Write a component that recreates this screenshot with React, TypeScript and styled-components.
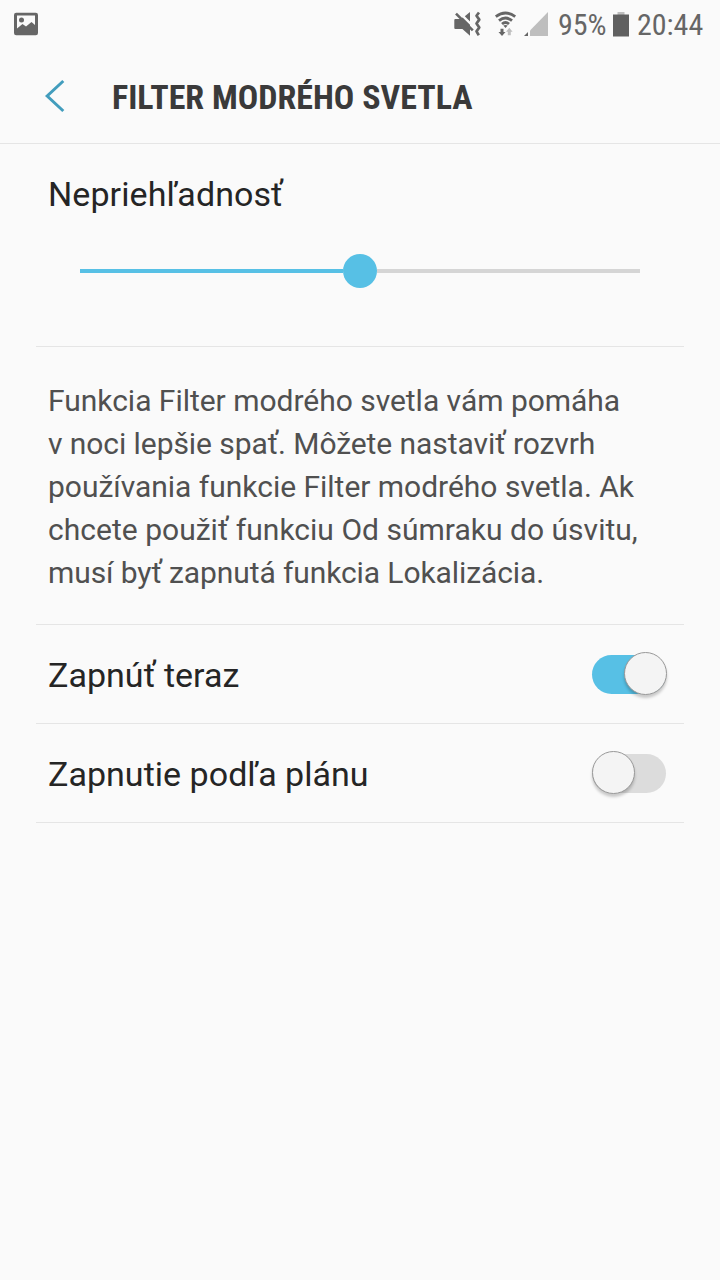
import React, { useState } from 'react';
import styled, { createGlobalStyle } from 'styled-components';

const GlobalStyle = createGlobalStyle`
  * { box-sizing: border-box; }
  body { margin: 0; background: #fafafa; }
`;

const Screen = styled.main`
  width: 720px;
  height: 1280px;
  background: #fafafa;
  color: #252525;
  font-family: Roboto, sans-serif;
  overflow: hidden;
`;

const StatusBar = styled.div`
  height: 48px;
  display: flex;
  align-items: center;
  justify-content: space-between;
  padding: 0 16px 0 14px;
`;

const StatusGroup = styled.div`
  display: flex;
  align-items: center;
`;

const Icon = styled.svg<{ $gap?: number }>`
  display: block;
  flex: none;
  margin-right: ${({ $gap = 0 }) => $gap}px;
`;

const StatusText = styled.span<{ $width: number }>`
  width: ${({ $width }) => $width}px;
  font: 400 30px/48px 'Roboto Condensed', Roboto, sans-serif;
  font-stretch: 75%;
  color: #666;
  white-space: nowrap;
  padding-top: 2px;
`;

const Header = styled.header`
  height: 96px;
  display: flex;
  align-items: center;
  padding-left: 44px;
  border-bottom: 1px solid #e5e5e5;
`;

const BackButton = styled.button`
  width: 68px;
  padding: 0;
  border: 0;
  background: none;
`;

const Title = styled.h1`
  margin: 0;
  font: 700 34px/40px 'Roboto Condensed', Roboto, sans-serif;
  font-stretch: 75%;
  color: #3a3a3a;
  white-space: nowrap;
  padding-top: 3px;
`;

const Section = styled.section<{ $height: number }>`
  height: ${({ $height }) => $height}px;
  margin: 0 36px;
  padding: 0 12px;
  border-bottom: 1px solid #e5e5e5;
`;

const Label = styled.div`
  font-size: 34px;
  line-height: 40px;
  letter-spacing: 0.03px;
  white-space: nowrap;
`;

const OpacityLabel = styled(Label)`
  padding-top: 30px;
  letter-spacing: 0.08px;
`;

const RowLabel = styled(Label)`
  padding-top: 2px;
`;

const Track = styled.div`
  display: flex;
  align-items: center;
  height: 34px;
  margin: 40px 32px 0;
`;

const Segment = styled.div<{ $filled?: boolean }>`
  flex: 1;
  height: 4px;
  background: ${({ $filled }) => ($filled ? '#57c0e5' : '#d5d5d5')};
`;

const Thumb = styled.div`
  width: 34px;
  height: 34px;
  border-radius: 50%;
  background: #57c0e5;
`;

const Description = styled.p`
  margin: 0;
  padding-top: 32px;
  font-size: 30px;
  line-height: 43px;
  color: #505050;
  white-space: nowrap;
`;

const Line = styled.span<{ $tracking: number }>`
  display: block;
  letter-spacing: ${({ $tracking }) => $tracking}px;
`;

const Row = styled(Section)`
  display: flex;
  align-items: center;
  justify-content: space-between;
  padding-right: 18px;
`;

const Switch = styled.button<{ $on: boolean }>`
  display: flex;
  align-items: center;
  justify-content: ${({ $on }) => ($on ? 'flex-end' : 'flex-start')};
  width: 74px;
  height: 39px;
  padding: 0;
  border: 0;
  border-radius: 20px;
  background: ${({ $on }) => ($on ? '#57c0e5' : '#dcdcdc')};
`;

const Knob = styled.span<{ $on: boolean }>`
  flex: none;
  width: 43px;
  height: 43px;
  margin: -2px ${({ $on }) => ($on ? -1 : 0)}px 0 0;
  border: 1px solid #999;
  border-radius: 50%;
  background: #f4f4f4;
  box-shadow: 0 3px 3px rgba(0, 0, 0, 0.2);
`;

const StatusIcons = () => (
  <>
    <Icon width="28" height="28" viewBox="453 10 28 28" $gap={13}>
      <path d="M454.300 20q0-1 1-1h5.500l1.800-1.600 7.400 7.400v11l-7.600-6.800h-7.100q-1 0-1-1z M464.800 16.300l5.200-4.300v9.500z" fill="#666" />
      <path d="M456 13.600l16.800 16.800" stroke="#666" strokeWidth="2.600" />
      <path d="M479 12.500l-2.500 3.300 2.800 3.800-2.800 3.900 2.800 4-2.800 3.900 2.300 3.800" stroke="#666" strokeWidth="2.700" fill="none" strokeLinejoin="round" />
    </Icon>
    <Icon width="24" height="28" viewBox="494 10 24 28" $gap={6}>
      <g fill="none" stroke="#666" strokeWidth="2.800">
        <path d="M495.800 16.600q9.700-7.200 19.400 0M499 20.700q6.500-5.400 13 0M502 24q3.500-3 7 0" />
      </g>
      <path d="M503.300 25.500q2.200-1.200 4.400 0l-2.200 2.500z" fill="#666" />
      <path d="M500.500 28.700h3v3.300h2l-3.500 4-3.500-4h2z" fill="#666" />
      <path d="M507.800 35.300v-3.500h-1.800l3.300-4 3.300 4h-1.800v3.500z" fill="#bebebe" />
    </Icon>
    <Icon width="26" height="28" viewBox="524 10 26 28" $gap={8}>
      <path d="M530 30.500L548 12v24h-18z" fill="#bebebe" />
      <path d="M524 36l4-4v4z" fill="#666" />
    </Icon>
  </>
);

const Toggle = ({ initial, label }: { initial: boolean; label: string }) => {
  const [on, setOn] = useState(initial);
  return (
    <Row $height={99}>
      <RowLabel>{label}</RowLabel>
      <Switch $on={on} role="switch" aria-checked={on} aria-label={label} onClick={() => setOn(!on)}>
        <Knob $on={on} />
      </Switch>
    </Row>
  );
};

export default function App() {
  return (
    <Screen>
      <GlobalStyle />
      <StatusBar>
        <Icon width="24" height="24" viewBox="0 0 24 24">
          <rect width="24" height="22.500" y="0.800" rx="2.200" fill="#666" />
          <path d="M3 3.500h18v9.500l-3.500-3-5.500 4.500-3.500-2.500-5.500 4.500z" fill="#fafafa" />
          <circle cx="7.500" cy="8" r="2.500" fill="#666" />
        </Icon>
        <StatusGroup>
          <StatusIcons />
          <StatusText $width={55}>95%</StatusText>
          <Icon width="16" height="26" viewBox="0 0 16 26" $gap={8}>
            <path d="M4.500 1h7v3h-7z" fill="#bebebe" />
            <path d="M0 3.500h16v22H0z" fill="#606060" />
          </Icon>
          <StatusText $width={67}>20:44</StatusText>
        </StatusGroup>
      </StatusBar>
      <Header>
        <BackButton aria-label="Späť">
          <Icon width="22" height="34" viewBox="0 0 22 34">
            <path d="M19.300 2L3.200 17l16.100 15" fill="none" stroke="#429dbd" strokeWidth="3" />
          </Icon>
        </BackButton>
        <Title>FILTER MODRÉHO SVETLA</Title>
      </Header>
      <Section $height={203}>
        <OpacityLabel>Nepriehľadnosť</OpacityLabel>
        <Track>
          <Segment $filled />
          <Thumb />
          <Segment />
        </Track>
      </Section>
      <Section $height={278}>
        <Description>
          <Line $tracking={-0.025}>Funkcia Filter modrého svetla vám pomáha</Line>
          <Line $tracking={-0.07}>v noci lepšie spať. Môžete nastaviť rozvrh</Line>
          <Line $tracking={-0.02}>používania funkcie Filter modrého svetla. Ak</Line>
          <Line $tracking={0.02}>chcete použiť funkciu Od súmraku do úsvitu,</Line>
          <Line $tracking={-0.1}>musí byť zapnutá funkcia Lokalizácia.</Line>
        </Description>
      </Section>
      <Toggle initial label="Zapnúť teraz" />
      <Toggle initial={false} label="Zapnutie podľa plánu" />
    </Screen>
  );
}
